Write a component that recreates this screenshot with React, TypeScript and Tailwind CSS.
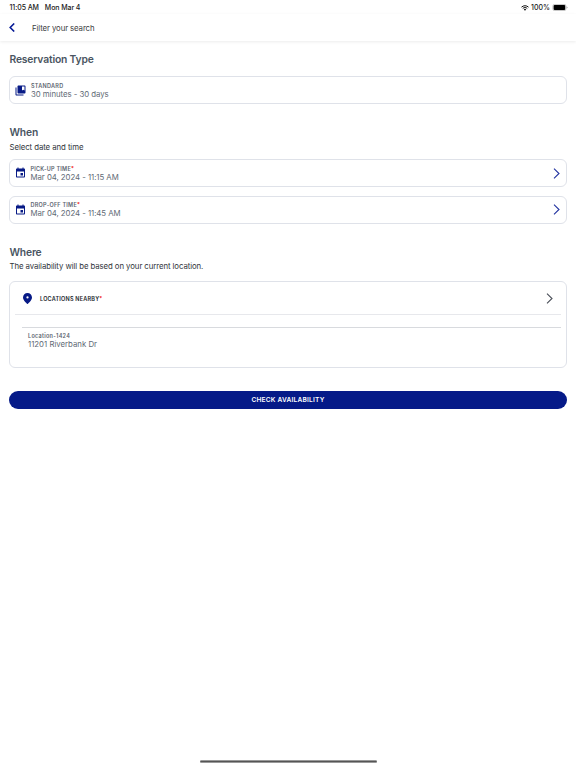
import type { ReactNode } from "react";

function BookmarksIcon() {
  return (
    <svg className="h-[11px] w-[11px] shrink-0 fill-[#071a86]" viewBox="1 1 22 22">
      <path d="M4 6H2v14c0 1.100.9 2 2 2h14v-2H4V6zm16-4H8c-1.100 0-2 .9-2 2v12c0 1.100.9 2 2 2h12c1.100 0 2-.9 2-2V4c0-1.100-.9-2-2-2zm0 10-2.500-1.500L15 12V4h5v8z" />
    </svg>
  );
}

function CalendarIcon() {
  return (
    <svg className="h-[12px] w-[11px] shrink-0 fill-[#071a86]" viewBox="1 0 22 24" preserveAspectRatio="none">
      <path d="M17 12h-5v5h5v-5zM16 1v2H8V1H6v2H5c-1.110 0-2 .9-2 2v14c0 1.100.89 2 2 2h14c1.100 0 2-.9 2-2V5c0-1.100-.9-2-2-2h-1V1h-2zm3 18H5V9h14v10z" />
    </svg>
  );
}

function PinIcon() {
  return (
    <svg className="h-[11px] w-[9px] shrink-0 fill-[#071a86]" viewBox="4 2 16 20" preserveAspectRatio="none">
      <path fillRule="evenodd" d="M12 2C7.600 2 4 5.500 4 10c0 5.400 8 12 8 12s8-6.600 8-12c0-4.500-3.600-8-8-8zm0 6a2 2 0 1 1 0 4 2 2 0 0 1 0-4z" />
    </svg>
  );
}

function Chevron({ className }: { className: string }) {
  return (
    <svg className={`h-[11px] w-[7px] shrink-0 fill-none ${className}`} viewBox="0 0 7 11">
      <path d="M1 .6 6 5.500 1 10.400" strokeWidth="1.100" />
    </svg>
  );
}

function Field({ icon, label, value, required }: { icon: ReactNode; label: string; value: string; required?: boolean }) {
  return (
    <div className={`flex h-[28px] items-center rounded-[6px] border border-[#dfe2e9] pl-[5px] pr-[6px] ${required ? "gap-[4.500px]" : "gap-[5px]"}`}>
      {icon}
      <div className="flex-1 pb-[1px]">
        <div className={`h-[8px] text-[5.500px] leading-[8px] font-semibold text-[#5c6570] ${required ? "tracking-[0.240px]" : "tracking-[0.280px]"}`}>
          {label}
          {required && <span className="text-[#f02020]">*</span>}
        </div>
        <div className="h-[8px] text-[7.800px] leading-[8px] tracking-[-0.040px] text-[#616a75]">{value}</div>
      </div>
      {required && <Chevron className="stroke-[#2233a0]" />}
    </div>
  );
}

export default function App() {
  return (
    <div className="flex h-[768px] w-[576px] flex-col bg-white font-['Inter','Liberation_Sans',sans-serif] whitespace-nowrap">
      <div className="flex h-[14px] items-center justify-between pt-px pr-[8px] pl-[9.500px] text-[7px] font-medium text-[#202020]">
        <div className="flex gap-[6px] pt-px tracking-[-0.080px]">
          <span>11:05 AM</span>
          <span>Mon Mar 4</span>
        </div>
        <div className="flex items-center">
          <svg className="mr-[2px] h-[6px] w-[8px] fill-none stroke-[#111]" viewBox="0 0 16 12">
            <path d="M1 4.300c4-3.800 10-3.800 14 0M3.500 7c2.600-2.500 6.400-2.500 9 0" strokeWidth="2" />
            <path d="m8 11.500-2.400-2.400c1.400-1.200 3.400-1.200 4.800 0z" fill="#111" stroke="none" />
          </svg>
          <span className="pt-px">100%</span>
          <svg className="ml-[2px] h-[7px] w-[16px]" viewBox="0 0 16 7">
            <rect x=".9" y=".4" width="13" height="6.200" rx="1.700" fill="none" stroke="#999" strokeWidth=".6" />
            <rect x="1.600" y="1.100" width="11.600" height="4.800" rx="1" fill="#000" />
            <path d="M14.600 2.400q1 .4 1 1.100t-1 1.100z" fill="#999" />
          </svg>
        </div>
      </div>

      <header className="flex h-[27px] items-center pl-[9px] shadow-[0_1px_3px_rgba(0,0,0,0.080)]">
        <svg className="h-[9px] w-[6px] fill-none stroke-[#071a96]" viewBox="0 0 6 9">
          <path d="M5.200.5 1.200 4.500l4 4" strokeWidth="1.600" />
        </svg>
        <span className="ml-[17px] pt-[2px] text-[7.800px] tracking-[-0.100px] text-[#3d4043]">Filter your search</span>
      </header>

      <main className="flex flex-col px-[9px]">
        <h1 className="mt-[11px] h-[14px] pl-[0.500px] text-[10.300px] leading-[14px] font-semibold tracking-[-0.160px] text-[#4a5562]">Reservation Type</h1>
        <div className="mt-[10px]">
          <Field icon={<BookmarksIcon />} label="STANDARD" value="30 minutes - 30 days" />
        </div>

        <h2 className="mt-[21px] h-[14px] pl-[0.500px] text-[10.300px] leading-[14px] font-semibold tracking-[-0.160px] text-[#4a5562]">When</h2>
        <p className="mt-[3px] h-[10px] pl-[0.500px] text-[7.800px] leading-[10px] tracking-[-0.070px] text-[#30353b]">Select date and time</p>
        <div className="mt-[7px] flex flex-col gap-[8.500px]">
          <Field icon={<CalendarIcon />} label="PICK-UP TIME" value="Mar 04, 2024 - 11:15 AM" required />
          <Field icon={<CalendarIcon />} label="DROP-OFF TIME" value="Mar 04, 2024 - 11:45 AM" required />
        </div>

        <h2 className="mt-[21.500px] h-[14px] pl-[0.500px] text-[10.300px] leading-[14px] font-semibold tracking-[-0.160px] text-[#4a5562]">Where</h2>
        <p className="mt-[2px] h-[10px] pl-[0.500px] text-[7.800px] leading-[10px] tracking-[-0.080px] text-[#30353b]">
          The availability will be based on your current location.
        </p>
        <section className="mt-[10px] h-[87px] rounded-[6px] border border-[#dfe2e9] px-[5px]">
          <div className="flex h-[33px] items-center border-b border-[#e7e8ec] pr-[8px] pl-[8px]">
            <PinIcon />
            <span className="ml-[8px] flex-1 pt-[2px] text-[5.500px] font-semibold tracking-[0.220px] text-[#20242a]">
              LOCATIONS NEARBY<span className="text-[#f02020]">*</span>
            </span>
            <Chevron className="stroke-[#4a4f58]" />
          </div>
          <div className="mt-[12px] ml-[7px] border-t border-[#d8dade] pt-[4px] pl-[6px]">
            <div className="h-[8px] text-[5.500px] leading-[9px] font-semibold tracking-[0.280px] text-[#5c6570]">Location-1424</div>
            <div className="h-[8px] text-[7.800px] leading-[8px] text-[#616a75]">11201 Riverbank Dr</div>
          </div>
        </section>

        <button className="mt-[22.500px] h-[18px] rounded-[9px] bg-[#051a88] pt-[2px] text-[6.600px] font-semibold tracking-[0.200px] text-white">
          CHECK AVAILABILITY
        </button>
      </main>

      <div className="mt-auto mb-[5px] h-[3px] w-[177px] self-center rounded-full border-y-[0.500px] border-[#999] bg-[#555]" />
    </div>
  );
}
